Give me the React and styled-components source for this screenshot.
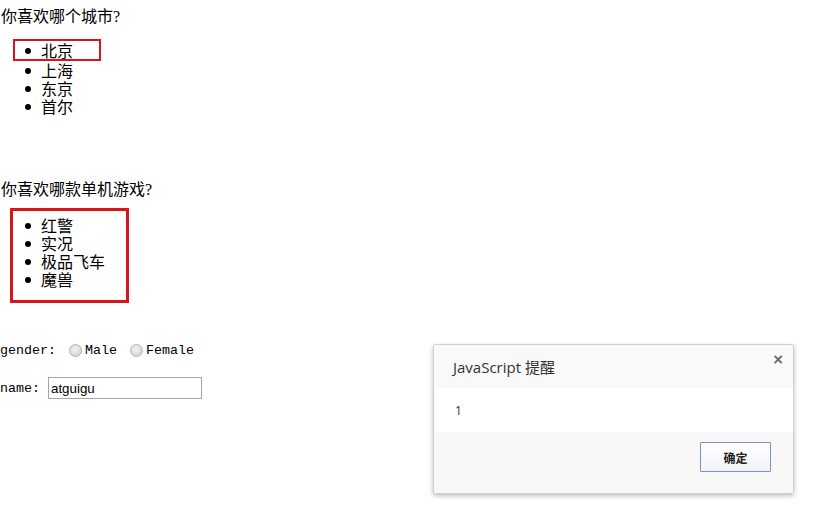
import React from "react"
import styled, { createGlobalStyle } from "styled-components"

const GlobalStyle = createGlobalStyle`
  html, body {
    margin: 0;
    padding: 0;
    background: #ffffff;
  }
  body {
    font-family: "Liberation Serif", "Noto Sans CJK SC", serif;
    font-size: 16px;
    color: #000;
  }
`

const Page = styled.div`
  position: relative;
  width: 816px;
  height: 529px;
  padding-top: 8px;
  box-sizing: border-box;
`

const Question = styled.div`
  font-family: "Liberation Serif", "Noto Sans CJK SC", serif;
  font-size: 16px;
  line-height: 18px;
  margin-top: ${p => p.$top || 0}px;
  padding-left: 1px;
`

const List = styled.ul`
  margin: ${p => p.$top || 0}px 0 0 ${p => (p.$boxed ? 10 : 13)}px;
  padding: ${p => (p.$boxed ? "5px 0 12px 0" : "0")};
  width: ${p => (p.$boxed ? "113px" : "auto")};
  border: ${p => (p.$boxed ? "3px solid #d9141b" : "none")};
  list-style: none;
  font-family: "Noto Sans CJK SC", sans-serif;
  font-size: 16px;
  line-height: 18px;
`

const Item = styled.li`
  display: flex;
  align-items: center;
  height: 18px;
  border: 2px solid transparent;
  border-top-width: ${p => (p.$framed ? 2 : 0)}px;
  border-bottom-width: ${p => (p.$framed ? 2 : 0)}px;
  border-color: ${p => (p.$framed ? "#d9141b" : "transparent")};
  width: ${p => (p.$framed ? "88px" : "auto")};
  box-sizing: content-box;
  ${p => p.$framed && "width: 84px;"}

  &::before {
    content: "";
    flex: none;
    width: 6px;
    height: 6px;
    margin: 1px 10px 0 10px;
    border-radius: 50%;
    background: #000;
  }
`

const FormRow = styled.div`
  display: flex;
  align-items: center;
  height: ${p => p.$h || 18}px;
  margin-top: ${p => p.$top || 0}px;
  font-family: "Liberation Mono", monospace;
  font-size: 13.33px;
  white-space: pre;
`

const Radio = styled.input.attrs({ type: "radio" })`
  appearance: none;
  width: 13px;
  height: 13px;
  margin: 0 3px 0 5px;
  border-radius: 50%;
  border: 1px solid #b4b4b4;
  box-sizing: border-box;
  background: radial-gradient(circle at 45% 40%, #f4f4f4 0%, #dcdcdc 60%, #c8c8c8 100%);
`

const TextInput = styled.input`
  width: 154px;
  height: 22px;
  box-sizing: border-box;
  padding: 1px 2px;
  margin: 0;
  border: 1px solid #a6a6a6;
  font-family: "Liberation Sans", Arial, sans-serif;
  font-size: 13.33px;
  color: #000;
  outline: none;
`

const Dialog = styled.div`
  position: absolute;
  left: 433px;
  top: 344px;
  width: 361px;
  height: 150px;
  box-sizing: border-box;
  border: 1px solid #cfcfcf;
  border-radius: 2px;
  box-shadow: 0 2px 5px rgba(0, 0, 0, 0.25);
  display: flex;
  flex-direction: column;
  font-family: "Open Sans", "Noto Sans CJK SC", sans-serif;
  overflow: hidden;
`

const DialogHead = styled.div`
  position: relative;
  height: 43px;
  display: flex;
  align-items: center;
  padding-left: 19px;
  background: #f9f9f9;
  font-size: 15px;
  color: #333;
`

const Close = styled.span`
  position: absolute;
  top: 6px;
  right: 9px;
  font-family: "DejaVu Sans", sans-serif;
  font-size: 14px;
  font-weight: bold;
  color: #666;
`

const DialogBody = styled.div`
  height: 44px;
  display: flex;
  align-items: center;
  padding-left: 21px;
  background: #ffffff;
  font-size: 12px;
  color: #333;
`

const DialogFoot = styled.div`
  flex: 1;
  display: flex;
  justify-content: flex-end;
  align-items: flex-start;
  padding: 10px 22px 0 0;
  background: #f8f8f8;
`

const OkButton = styled.button`
  width: 71px;
  height: 30px;
  box-sizing: border-box;
  border: 1px solid #7d93b8;
  border-radius: 1px;
  background: linear-gradient(#ffffff, #f1f3f6);
  font-family: "Noto Sans CJK SC", sans-serif;
  font-size: 12px;
  font-weight: bold;
  color: #222;
  padding: 0;
`

export default function App() {
  const cities = ["北京", "上海", "东京", "首尔"]
  const games = ["红警", "实况", "极品飞车", "魔兽"]
  return (
    <Page>
      <GlobalStyle />
      <Question>你喜欢哪个城市?</Question>
      <List $top={13}>
        {cities.map((c, i) => (
          <Item key={c} $framed={i === 0}>
            {c}
          </Item>
        ))}
      </List>
      <Question $top={66}>你喜欢哪款单机游戏?</Question>
      <List $top={9} $boxed>
        {games.map(g => (
          <Item key={g}>{g}</Item>
        ))}
      </List>
      <FormRow $top={38}>
        {"gender: "}
        <Radio name="gender" />
        {"Male "}
        <Radio name="gender" />
        {"Female"}
      </FormRow>
      <FormRow $top={18} $h={22}>
        {"name: "}
        <TextInput defaultValue="atguigu" />
      </FormRow>
      <Dialog>
        <DialogHead>
          JavaScript 提醒
          <Close>×</Close>
        </DialogHead>
        <DialogBody>1</DialogBody>
        <DialogFoot>
          <OkButton>确定</OkButton>
        </DialogFoot>
      </Dialog>
    </Page>
  )
}
